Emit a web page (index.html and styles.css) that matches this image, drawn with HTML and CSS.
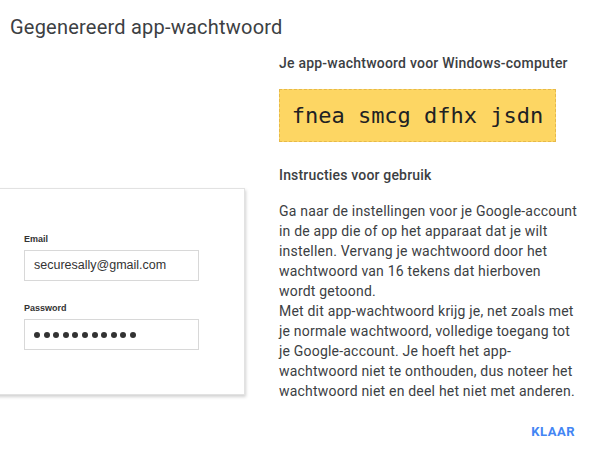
FILE: index.html
```html
<!DOCTYPE html>
<html lang="nl">
<head>
    <meta charset="UTF-8">
    <meta name="viewport" content="width=device-width, initial-scale=1.0">
    <title>Gegenereerd app-wachtwoord</title>
    <link rel="stylesheet" href="styles.css">
</head>
<body>
    <div class="dialog">
        <h1 class="title">Gegenereerd app-wachtwoord</h1>
        <div class="content">
            <div class="illustration">
                <div class="card">
                    <div class="field-label">Email</div>
                    <div class="field">securesally@gmail.com</div>
                    <div class="field-label second">Password</div>
                    <div class="field dots">
                        <span></span><span></span><span></span><span></span><span></span><span></span>
                        <span></span><span></span><span></span><span></span><span></span>
                    </div>
                </div>
            </div>
            <div class="info">
                <div class="subhead">Je app-wachtwoord voor Windows-computer</div>
                <div class="password">fnea smcg dfhx jsdn</div>
                <div class="subhead instructions">Instructies voor gebruik</div>
                <p class="text">Ga naar de instellingen voor je Google-account in de app die of op het apparaat dat je wilt instellen. Vervang je wachtwoord door het wachtwoord van 16 tekens dat hierboven wordt getoond.<br>Met dit app-wachtwoord krijg je, net zoals met je normale wachtwoord, volledige toegang tot je Google-account. Je hoeft het app-wachtwoord niet te onthouden, dus noteer het wachtwoord niet en deel het niet met anderen.</p>
                <div class="actions">
                    <button class="done">KLAAR</button>
                </div>
            </div>
        </div>
    </div>
</body>
</html>
```

FILE: styles.css
```css
body {
    font-family: Roboto, Arial, sans-serif;
    margin: 0;
    background: #fff;
    color: #3c4043;
    overflow: hidden;
}
.dialog {
    padding: 15px 0 0 10px;
}
.title {
    margin: 0;
    font-size: 20px;
    line-height: 24px;
    font-weight: 400;
    letter-spacing: 0.22px;
    color: #3c4043;
}
.content {
    display: flex;
    margin-top: 14px;
}
.illustration {
    width: 269px;
    padding-top: 135px;
}
.card {
    margin-left: -30px;
    width: 265px;
    height: 207px;
    box-sizing: border-box;
    padding: 44px 0 0 43px;
    background: #fff;
    border: 1px solid #e2e2e2;
    box-shadow: 1px 2px 3px rgba(0, 0, 0, 0.18);
    font-family: "Liberation Sans", Arial, sans-serif;
}
.field-label {
    font-size: 9px;
    line-height: 12px;
    font-weight: bold;
    color: #333;
    margin-bottom: 5px;
}
.field-label.second {
    margin-top: 21px;
}
.field {
    width: 175px;
    height: 31px;
    box-sizing: border-box;
    border: 1px solid #d8d8d8;
    padding: 0 9px;
    font-size: 12.5px;
    line-height: 29px;
    color: #333;
}
.dots {
    display: flex;
    align-items: center;
    gap: 3.6px;
}
.dots span {
    width: 6px;
    height: 6px;
    border-radius: 50%;
    background: #333;
}
.info {
    width: 302px;
}
.subhead {
    font-size: 14px;
    line-height: 20px;
    font-weight: 500;
    letter-spacing: 0.22px;
    color: #3c4043;
}
.password {
    margin-top: 16px;
    width: 277px;
    height: 53px;
    box-sizing: border-box;
    background: #fdd663;
    border: 1px dashed #e6b94a;
    font-family: "DejaVu Sans Mono", "Liberation Mono", monospace;
    font-size: 22px;
    line-height: 51px;
    text-align: center;
    color: #202124;
}
.instructions {
    margin-top: 23px;
    letter-spacing: 0.18px;
}
.text {
    margin: 16px 0 0;
    font-size: 14px;
    line-height: 20px;
    letter-spacing: 0.2px;
    color: #3c4043;
}
.actions {
    display: flex;
    justify-content: flex-end;
    margin-top: 21px;
    padding-right: 6px;
}
.done {
    border: 0;
    background: none;
    padding: 0;
    font-family: Roboto, Arial, sans-serif;
    font-size: 13px;
    line-height: 20px;
    font-weight: 700;
    letter-spacing: 0.5px;
    color: #4285f4;
    cursor: pointer;
}
```
